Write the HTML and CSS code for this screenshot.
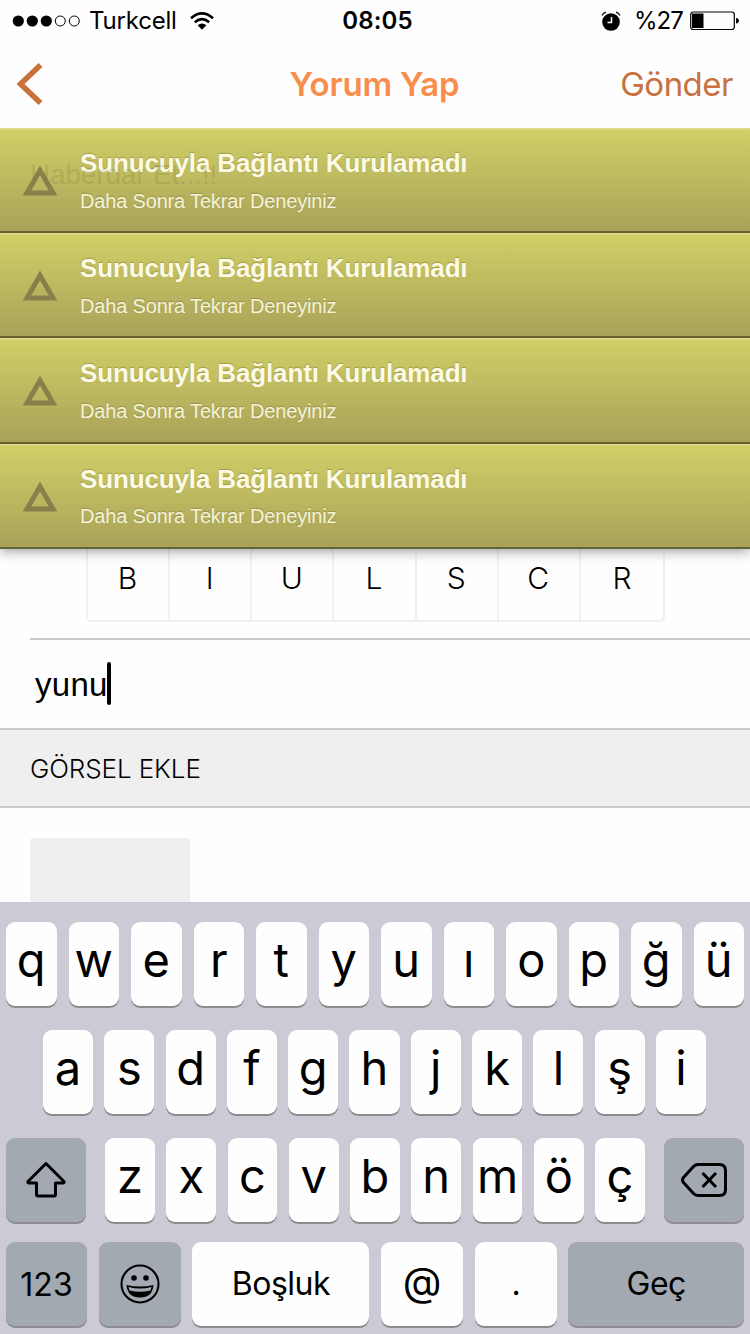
FILE: index.html
```html
<!DOCTYPE html>
<html lang="tr">
<head>
    <meta charset="UTF-8">
    <meta name="viewport" content="width=device-width, initial-scale=1.0">
    <title>Yorum Yap</title>
    <link rel="stylesheet" href="styles.css">
</head>
<body>
    <div class="screen">
        <header class="header">
            <div class="status-bar">
                <div class="status-left">
                    <svg class="signal" width="68" height="12" viewBox="0 0 68 12">
                        <circle cx="6.3" cy="6" r="5.6"/>
                        <circle cx="20.3" cy="6" r="5.6"/>
                        <circle cx="34.3" cy="6" r="5.6"/>
                        <circle cx="48.3" cy="6" r="5" fill="none" stroke="#000"/>
                        <circle cx="62.3" cy="6" r="5" fill="none" stroke="#000"/>
                    </svg>
                    <span class="carrier">Turkcell</span>
                    <svg class="wifi" width="24" height="18" viewBox="0 0 24 18">
                        <path d="M1 6.200Q12 -3.400 23 6.200" fill="none" stroke="#000" stroke-width="2.600"/>
                        <path d="M4.800 10.200Q12 4 19.200 10.200" fill="none" stroke="#000" stroke-width="2.600"/>
                        <path d="M7.600 13.300Q12 9.600 16.400 13.300L12 17.800Z"/>
                    </svg>
                </div>
                <div class="clock">08:05</div>
                <div class="status-right">
                    <svg class="alarm" width="20" height="20" viewBox="0 0 20 20">
                        <circle cx="10" cy="11" r="8.800"/>
                        <path d="M1 4.500Q2.500 2 5 1.200M19 4.500Q17.500 2 15 1.200" fill="none" stroke="#000" stroke-width="1.300"/>
                        <path d="M10.500 6V11.500H6.500" fill="none" stroke="#fff" stroke-width="1.500"/>
                    </svg>
                    <span class="percent">%27</span>
                    <svg class="battery" width="49" height="20" viewBox="0 0 49 20">
                        <rect x=".7" y="1" width="43.600" height="17.500" rx="2.500" fill="none" stroke="#000" stroke-width="1.200"/>
                        <rect x="2" y="2.500" width="11.500" height="14.500"/>
                        <path d="M46 7Q49 7.500 49 9.800Q49 12 46 12.600Z"/>
                    </svg>
                </div>
            </div>
            <nav class="navbar">
                <svg class="back" width="28" height="42" viewBox="0 0 28 42">
                    <path d="M24.500 2L4.500 21L24.500 40" fill="none" stroke="#c8713a" stroke-width="5.500"/>
                </svg>
                <h1>Yorum Yap</h1>
                <span class="send">Gönder</span>
            </nav>
        </header>

        <main class="content">
            <div class="toolbar">
                <span>B</span><span>I</span><span>U</span><span>L</span><span>S</span><span>C</span><span>R</span>
            </div>
            <div class="comment"><span>yunu</span><i class="caret"></i></div>
            <h2 class="section-title">GÖRSEL EKLE</h2>
            <div class="images"><div class="image-slot"></div></div>
        </main>

        <div class="alerts">
            <div class="alert">
                <p class="behind">Haberdar Et...!!</p>
                <svg class="warning" width="36" height="34" viewBox="0 0 36 34"><path d="M18 6.500L31 29H5Z"/></svg>
                <div><strong>Sunucuyla Bağlantı Kurulamadı</strong><p>Daha Sonra Tekrar Deneyiniz</p></div>
            </div>
            <div class="alert">
                <svg class="warning" width="36" height="34" viewBox="0 0 36 34"><path d="M18 6.500L31 29H5Z"/></svg>
                <div><strong>Sunucuyla Bağlantı Kurulamadı</strong><p>Daha Sonra Tekrar Deneyiniz</p></div>
            </div>
            <div class="alert">
                <svg class="warning" width="36" height="34" viewBox="0 0 36 34"><path d="M18 6.500L31 29H5Z"/></svg>
                <div><strong>Sunucuyla Bağlantı Kurulamadı</strong><p>Daha Sonra Tekrar Deneyiniz</p></div>
            </div>
            <div class="alert">
                <svg class="warning" width="36" height="34" viewBox="0 0 36 34"><path d="M18 6.500L31 29H5Z"/></svg>
                <div><strong>Sunucuyla Bağlantı Kurulamadı</strong><p>Daha Sonra Tekrar Deneyiniz</p></div>
            </div>
        </div>

        <div class="keyboard">
            <div class="row row-1">
                <div class="key">q</div><div class="key">w</div><div class="key">e</div><div class="key">r</div><div class="key">t</div><div class="key">y</div><div class="key">u</div><div class="key">ı</div><div class="key">o</div><div class="key">p</div><div class="key">ğ</div><div class="key">ü</div>
            </div>
            <div class="row row-2">
                <div class="key">a</div><div class="key">s</div><div class="key">d</div><div class="key">f</div><div class="key">g</div><div class="key">h</div><div class="key">j</div><div class="key">k</div><div class="key">l</div><div class="key">ş</div><div class="key">i</div>
            </div>
            <div class="row row-3">
                <div class="key dark icon">
                    <svg width="40" height="38" viewBox="0 0 40 38" fill="none" stroke="#000" stroke-width="3" stroke-linejoin="round">
                        <path d="M20 2.500L38 20.500Q38.500 22 37 22H29.500V33.500Q29.500 35 28 35H12Q10.500 35 10.500 33.500V22H3Q1.500 22 2 20.500Z"/>
                    </svg>
                </div>
                <div class="letters">
                    <div class="key">z</div><div class="key">x</div><div class="key">c</div><div class="key">v</div><div class="key">b</div><div class="key">n</div><div class="key">m</div><div class="key">ö</div><div class="key">ç</div>
                </div>
                <div class="key dark icon">
                    <svg width="46" height="34" viewBox="0 0 46 34" fill="none" stroke="#000" stroke-width="3" stroke-linejoin="round">
                        <path d="M17 1.500H38.500Q44.500 1.500 44.500 7.500V26.500Q44.500 32.500 38.500 32.500H17Q14.500 32.500 12.500 30.500L2.500 19.500Q.5 17 2.500 14.500L12.500 3.500Q14.500 1.500 17 1.500Z"/>
                        <path d="M21.500 10L35 24M35 10L21.500 24"/>
                    </svg>
                </div>
            </div>
            <div class="row row-4">
                <div class="key dark word digits">123</div>
                <div class="key dark icon">
                    <svg width="40" height="40" viewBox="0 0 40 40">
                        <circle cx="20" cy="20" r="18.500" fill="none" stroke="#000" stroke-width="2"/>
                        <circle cx="14" cy="14" r="2.800"/>
                        <circle cx="26" cy="14" r="2.800"/>
                        <path d="M6.500 21Q20 24 33.500 21Q32.500 33.500 20 33.500Q7.500 33.500 6.500 21Z"/>
                        <path d="M8.500 23Q20 26 31.500 23L30.500 26.500Q20 29 9.500 26.500Z" fill="#a2a9b1"/>
                    </svg>
                </div>
                <div class="key word">Boşluk</div>
                <div class="key at">@</div>
                <div class="key word">.</div>
                <div class="key dark word">Geç</div>
            </div>
        </div>
    </div>
</body>
</html>
```
FILE: styles.css
```css
* {
    margin: 0;
    padding: 0;
    box-sizing: border-box;
}

body {
    font-family: Inter, "Liberation Sans", sans-serif;
    background-color: #fefefe;
    color: #000;
}

svg {
    display: block;
    flex: none;
}

.screen {
    position: relative;
    width: 750px;
    height: 1334px;
    display: flex;
    flex-direction: column;
    overflow: hidden;
}

/* header */
.header {
    height: 128px;
}

.status-bar {
    height: 40px;
    display: grid;
    grid-template-columns: 1fr auto 1fr;
    align-items: center;
    padding: 0 11px 0 12px;
    font-size: 24px;
    line-height: 42px;
}

.status-left,
.status-right {
    display: flex;
    align-items: center;
}

.status-right {
    justify-content: flex-end;
}

.carrier {
    margin: 0 13px 0 9px;
    letter-spacing: -0.2px;
}

.clock {
    font-weight: 600;
    letter-spacing: 0.1px;
    padding-left: 4px;
}

.percent {
    margin: 0 8px 0 13px;
    letter-spacing: -0.9px;
}

.alarm {
    margin-left: 2px;
}

.status-right .percent {
    margin-right: 7px;
}

.navbar {
    height: 88px;
    display: grid;
    grid-template-columns: 1fr auto 1fr;
    align-items: center;
    padding: 0 17px 0 16px;
}

.navbar h1 {
    font-size: 33px;
    font-weight: 600;
    letter-spacing: -0.2px;
    color: #f98d4b;
}

.send {
    justify-self: end;
    font-size: 33px;
    letter-spacing: -0.5px;
    color: #c8713f;
}

/* form behind the alerts */
.content {
    flex: 1;
    display: flex;
    flex-direction: column;
    padding-top: 407px;
    font-family: "Liberation Sans", Arial, sans-serif;
}

.toolbar {
    display: grid;
    grid-template-columns: repeat(7, 1fr);
    width: 579px;
    height: 87px;
    margin-left: 86px;
    border: 2px solid #f1f1f1;
    border-radius: 5px;
    font-size: 30px;
    line-height: 83px;
    text-align: center;
    font-family: Inter, sans-serif;
    font-weight: 300;
}

.toolbar span {
    padding-right: 1px;
    border-right: 2px solid #f1f1f1;
}

.toolbar span:last-child {
    padding-right: 0;
    border-right: none;
}

.comment {
    height: 90px;
    margin: 16px 0 0 30px;
    padding: 1px 0 0 5px;
    border-top: 2px solid #c9c9cb;
    display: flex;
    align-items: center;
    font-size: 33px;
    letter-spacing: 0.3px;
}

.caret {
    width: 4px;
    height: 43px;
    margin: -2px 0 0 -1px;
    border-radius: 2px;
    background-color: #000;
}

.section-title {
    height: 80px;
    padding-left: 30px;
    border-top: 2px solid #c9c9cb;
    border-bottom: 2px solid #c9c9cb;
    background-color: #efefef;
    font-family: Inter, sans-serif;
    font-size: 26px;
    font-weight: 300;
    letter-spacing: -0.1px;
    line-height: 77px;
}

.images {
    padding: 30px 30px 0;
}

.image-slot {
    width: 160px;
    height: 64px;
    border-radius: 3px 3px 0 0;
    background-color: #efefef;
}

/* alerts lie over the form */
.alerts {
    position: absolute;
    top: 128px;
    left: 0;
    width: 100%;
    box-shadow: 0 2px 12px rgba(0, 0, 20, 0.4);
    clip-path: inset(0 0 -20px 0);
}

.alert {
    position: relative;
    display: flex;
    align-items: flex-start;
    height: 105.2px;
    padding: 18px 22px 0;
    border-top: 2px solid #dcd885;
    border-bottom: 2px solid #69602f;
    background: linear-gradient(#d0cf67, #a9a259);
    font-family: "Liberation Sans", Arial, sans-serif;
    color: #fdfbe6;
    text-shadow: 0 -1px 1px rgba(90, 85, 20, 0.35);
}

.alert:last-child {
    border-bottom-color: #606736;
}

.warning {
    position: relative;
    margin: 16px 22px 0 0;
    fill: none;
    stroke: #87804a;
    stroke-width: 5;
}

.alert strong {
    display: block;
    font-size: 26px;
    letter-spacing: -0.14px;
    line-height: 30px;
}

.alert p {
    margin-top: 10.5px;
    font-size: 20px;
    letter-spacing: -0.17px;
    line-height: 24px;
    opacity: 0.9;
}

/* faint line showing through the first alert */
.alert .behind {
    position: absolute;
    top: 18px;
    left: 30px;
    font-size: 28px;
    line-height: 32px;
    text-shadow: none;
    color: rgba(80, 90, 20, 0.17);
}

/* keyboard */
.keyboard {
    height: 432px;
    padding: 20px 6px 0;
    display: flex;
    flex-direction: column;
    flex: none;
    background-color: #cccbd5;
}

.row {
    display: grid;
    height: 84px;
    margin-bottom: 24px;
    column-gap: 12px;
}

.row-1 {
    grid-template-columns: repeat(12, 1fr);
}

.row-2 {
    grid-template-columns: repeat(11, 1fr);
    column-gap: 11.3px;
    padding: 0 38px 0 37px;
}

.row-3 {
    grid-template-columns: 80px 540px 80px;
    column-gap: 19px;
    margin-bottom: 20px;
}

.row-4 {
    grid-template-columns: 81px 82px 177px 82px 82px 1fr;
    column-gap: 11.7px;
    margin-bottom: 0;
}

.letters {
    display: grid;
    grid-template-columns: repeat(9, 1fr);
    column-gap: 11.3px;
}

.key {
    display: flex;
    align-items: center;
    justify-content: center;
    min-width: 0;
    padding-bottom: 8px;
    border-radius: 9px;
    background-color: #fefefe;
    box-shadow: 0 2px 0 #8b8b90;
    font-size: 47px;
    line-height: 76px;
}

.dark {
    background-color: #a2a9b1;
}

.icon {
    padding-bottom: 0;
}

.word {
    padding-bottom: 1px;
    font-size: 32px;
    letter-spacing: -0.5px;
}

.digits {
    padding-bottom: 0;
    padding-top: 2px;
    letter-spacing: 0;
}

.at {
    padding-bottom: 4px;
    font-size: 40px;
}
```
